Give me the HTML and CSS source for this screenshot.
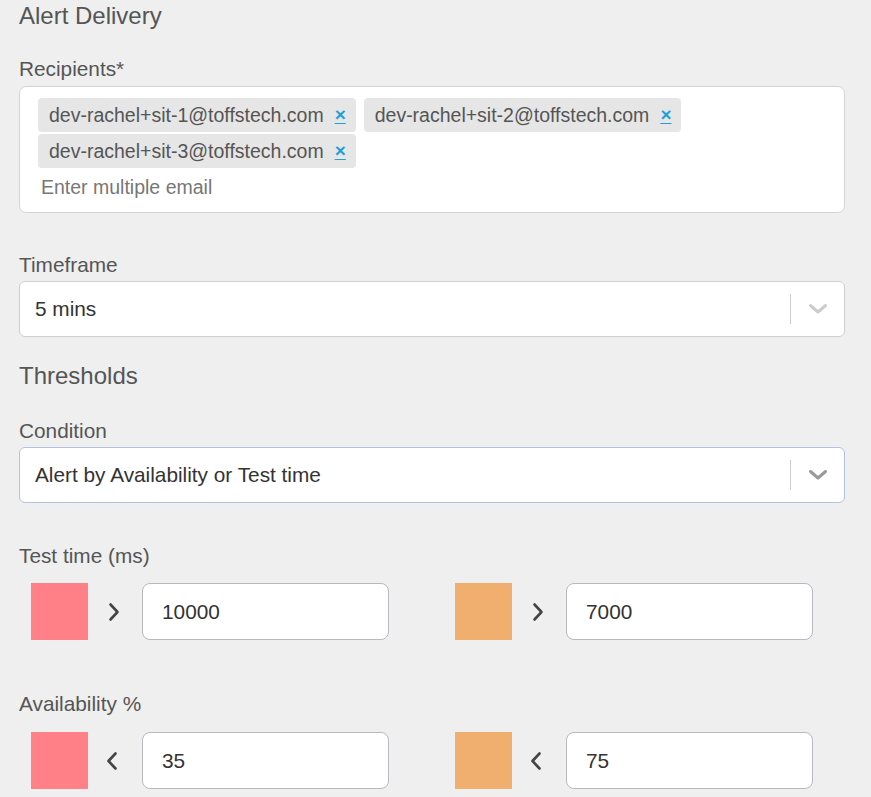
FILE: index.html
```html
<!DOCTYPE html>
<html lang="en">
<head>
<meta charset="utf-8">
<title>Alert Delivery</title>
<link rel="stylesheet" href="styles.css">
</head>
<body>
<div class="page">
  <h2 class="section-title title-first">Alert Delivery</h2>

  <label class="field-label label-recipients">Recipients*</label>
  <div class="tag-input">
    <div class="tags">
      <span class="tag"><span class="tag-text">dev-rachel+sit-1@toffstech.com</span><a class="tag-remove" href="#">×</a></span>
      <span class="tag"><span class="tag-text">dev-rachel+sit-2@toffstech.com</span><a class="tag-remove" href="#">×</a></span>
      <span class="tag"><span class="tag-text">dev-rachel+sit-3@toffstech.com</span><a class="tag-remove" href="#">×</a></span>
      <input class="tag-entry" type="text" placeholder="Enter multiple email">
    </div>
  </div>

  <label class="field-label label-timeframe">Timeframe</label>
  <div class="select">
    <div class="select-value">5 mins</div>
    <div class="select-indicators">
      <span class="select-sep"></span>
      <span class="select-arrow">
        <svg width="20" height="12" viewBox="0 0 20 12"><polyline points="2.5,2.5 10,9 17.5,2.5" fill="none" stroke="currentColor" stroke-width="3" stroke-linecap="round" stroke-linejoin="round"/></svg>
      </span>
    </div>
  </div>

  <h2 class="section-title title-thresholds">Thresholds</h2>

  <label class="field-label label-condition">Condition</label>
  <div class="select select-focused">
    <div class="select-value">Alert by Availability or Test time</div>
    <div class="select-indicators">
      <span class="select-sep"></span>
      <span class="select-arrow">
        <svg width="20" height="12" viewBox="0 0 20 12"><polyline points="2.5,2.5 10,9 17.5,2.5" fill="none" stroke="currentColor" stroke-width="3" stroke-linecap="round" stroke-linejoin="round"/></svg>
      </span>
    </div>
  </div>

  <label class="field-label label-testtime">Test time (ms)</label>
  <div class="threshold-row row-testtime">
    <div class="threshold">
      <span class="swatch swatch-red"></span>
      <span class="op"><svg width="12" height="20" viewBox="0 0 12 20"><polyline points="2.5,2.5 9.5,10 2.5,17.5" fill="none" stroke="currentColor" stroke-width="2.6" stroke-linecap="round" stroke-linejoin="round"/></svg></span>
      <input class="num-input" type="text" value="10000">
    </div>
    <div class="threshold">
      <span class="swatch swatch-orange"></span>
      <span class="op"><svg width="12" height="20" viewBox="0 0 12 20"><polyline points="2.5,2.5 9.5,10 2.5,17.5" fill="none" stroke="currentColor" stroke-width="2.6" stroke-linecap="round" stroke-linejoin="round"/></svg></span>
      <input class="num-input" type="text" value="7000">
    </div>
  </div>

  <label class="field-label label-availability">Availability %</label>
  <div class="threshold-row row-availability">
    <div class="threshold">
      <span class="swatch swatch-red"></span>
      <span class="op op-lt"><svg width="12" height="20" viewBox="0 0 12 20"><polyline points="9.5,2.5 2.5,10 9.5,17.5" fill="none" stroke="currentColor" stroke-width="2.6" stroke-linecap="round" stroke-linejoin="round"/></svg></span>
      <input class="num-input" type="text" value="35">
    </div>
    <div class="threshold">
      <span class="swatch swatch-orange"></span>
      <span class="op op-lt"><svg width="12" height="20" viewBox="0 0 12 20"><polyline points="9.5,2.5 2.5,10 9.5,17.5" fill="none" stroke="currentColor" stroke-width="2.6" stroke-linecap="round" stroke-linejoin="round"/></svg></span>
      <input class="num-input" type="text" value="75">
    </div>
  </div>
</div>
</body>
</html>
```
FILE: styles.css
```css
html, body {
  margin: 0;
  padding: 0;
  background: #efefef;
}
body {
  font-family: "Liberation Sans", Arial, Helvetica, sans-serif;
  color: #555;
  overflow: hidden;
}
.page {
  display: flex;
  flex-direction: column;
  align-items: flex-start;
  padding-left: 19px;
  width: 826px;
}
.section-title {
  margin: 0;
  font-size: 24px;
  font-weight: normal;
  line-height: 28px;
  color: #555;
}
.field-label {
  display: block;
  font-size: 20.8px;
  line-height: 24px;
  color: #555;
}
.title-first { margin-top: 2px; }
.label-recipients { margin-top: 27px; }
.label-timeframe { margin-top: 40px; }
.title-thresholds { margin-top: 25px; }
.label-condition { margin-top: 29px; }
.label-testtime { margin-top: 41px; }
.label-availability { margin-top: 51.5px; }

/* Recipients tag input */
.tag-input {
  box-sizing: border-box;
  width: 826px;
  margin-top: 5px;
  background: #fff;
  border: 1px solid #d4d4d4;
  border-radius: 7px;
  padding: 11px 10px 8px 18px;
}
.tags {
  display: flex;
  flex-wrap: wrap;
  column-gap: 8px;
  row-gap: 2px;
}
.tag {
  display: inline-flex;
  align-items: center;
  height: 34px;
  padding: 0 10px 0 11px;
  background: #e6e6e6;
  border-radius: 4px;
  font-size: 19.5px;
  color: #555;
}
.tag-remove {
  margin-left: 11px;
  width: 11px;
  color: #1ea1db;
  font-weight: bold;
  font-size: 19px;
  line-height: 20px;
  text-decoration: underline;
  text-underline-offset: 2px;
}
.tag-entry {
  display: block;
  flex: 0 0 100%;
  box-sizing: border-box;
  width: 100%;
  height: 34px;
  margin: 0;
  padding: 0 3px;
  border: none;
  outline: none;
  background: transparent;
  font-family: inherit;
  font-size: 19.5px;
  color: #333;
}
.tag-entry::placeholder {
  color: #777;
  opacity: 1;
}

/* Select */
.select {
  box-sizing: border-box;
  width: 826px;
  height: 56px;
  margin-top: 4px;
  display: flex;
  align-items: center;
  background: #fff;
  border: 1px solid #cfcfcf;
  border-radius: 6px;
}
.select-focused {
  border-color: #b3c3dc;
}
.select-value {
  flex: 1;
  padding-left: 15px;
  font-size: 20.8px;
  color: #333;
}
.select-indicators {
  display: flex;
  align-items: center;
  height: 100%;
}
.select-sep {
  width: 1.5px;
  height: 30px;
  background: #ccc;
}
.select-arrow {
  width: 53px;
  display: flex;
  justify-content: center;
  align-items: center;
  color: #ccc;
}
.select-focused .select-arrow {
  color: #999;
}

/* Threshold rows */
.threshold-row {
  display: grid;
  grid-template-columns: 424px 358px;
  padding-left: 12px;
}
.row-testtime { margin-top: 15px; }
.row-availability { margin-top: 16.5px; }
.threshold {
  display: flex;
  align-items: center;
}
.swatch {
  display: block;
  width: 57px;
  height: 57px;
}
.swatch-red { background: #ff8086; }
.swatch-orange { background: #f0ae6f; }
.op {
  display: flex;
  width: 12px;
  margin-left: 19.5px;
  margin-right: 22.5px;
  color: #444;
}
.op-lt {
  margin-left: 17.5px;
  margin-right: 24.5px;
}
.num-input {
  box-sizing: border-box;
  width: 247px;
  height: 57px;
  margin: 0;
  padding: 0 0 0 19px;
  border: 1px solid #b6b9c0;
  border-radius: 8px;
  background: #fff;
  outline: none;
  font-family: inherit;
  font-size: 20.8px;
  color: #333;
}
```
